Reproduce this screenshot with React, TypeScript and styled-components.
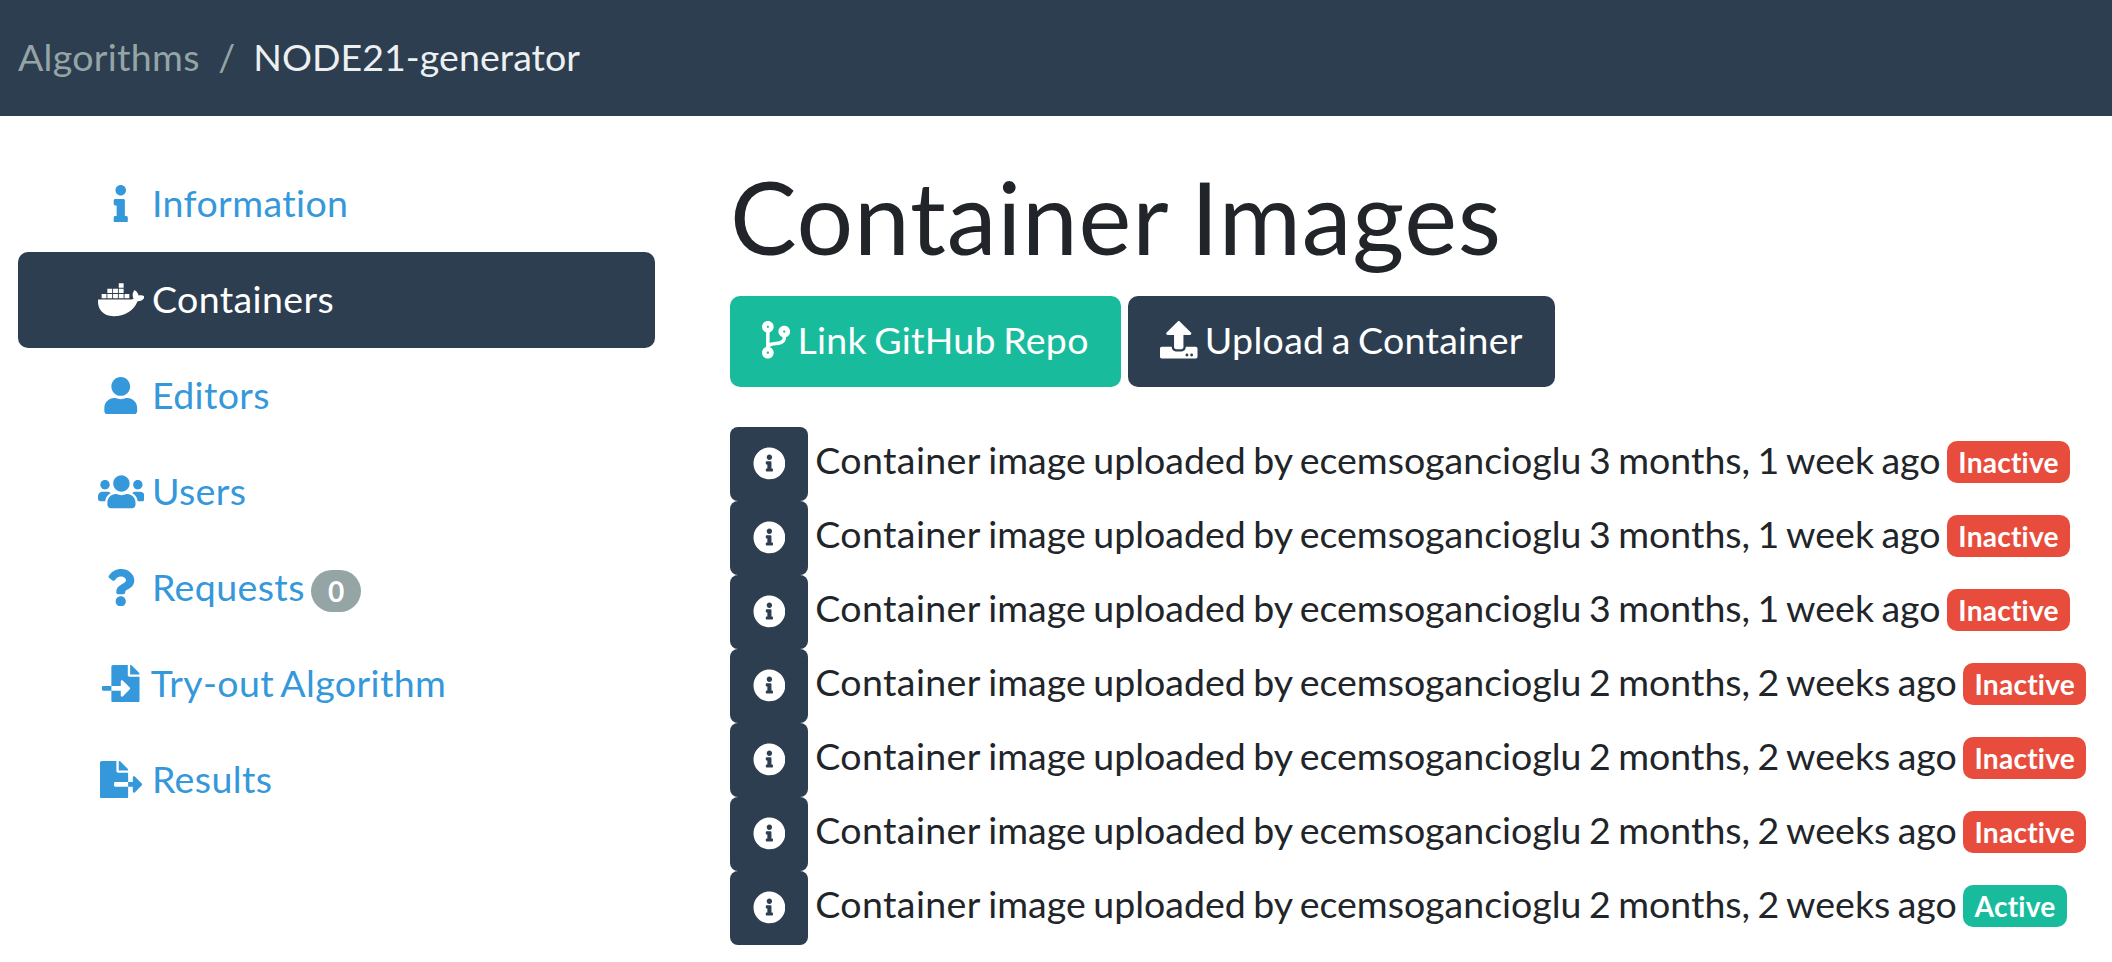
import React from "react";
import styled, { createGlobalStyle } from "styled-components";
import {
  FaInfo,
  FaDocker,
  FaUser,
  FaUsers,
  FaQuestion,
  FaFileImport,
  FaFileExport,
  FaCodeBranch,
  FaUpload,
  FaInfoCircle,
} from "react-icons/fa";
import type { IconType } from "react-icons";

const GlobalStyle = createGlobalStyle`
  *, *::before, *::after { box-sizing: border-box; }
  html, body { margin: 0; padding: 0; overflow: hidden; }
  body {
    background: #fff;
    color: #212529;
    font-family: Lato, "Open Sans", sans-serif;
    font-size: 37.5px;
    line-height: 1.5;
    font-variant-ligatures: none;
  }
  a { text-decoration: none; }
  svg { vertical-align: -0.125em; }
`;

const Breadcrumb = styled.nav`
  background: #2c3e50;
  padding: 29px 18px;
  height: 116px;
  display: flex;
`;

const Crumb = styled.a`
  color: #95a5a6;
  letter-spacing: 0.3px;
`;

const CurrentCrumb = styled.span`
  color: #ecf0f1;
  padding-left: 18.5px;
  letter-spacing: 0.05px;

  &::before {
    content: "/";
    color: #95a5a6;
    padding-right: 18px;
  }
`;

const Layout = styled.div`
  display: flex;
  gap: 75px;
  padding: 40px 0 0 18px;
`;

const Sidebar = styled.nav`
  flex: 0 0 637px;
  letter-spacing: 0.4px;
  word-spacing: -2.6px;
`;

const NavLink = styled.a<{ $active?: boolean }>`
  display: block;
  height: 96px;
  padding: 19px 40px 20px 80px;
  border-radius: 10px;
  color: ${(p) => (p.$active ? "#fff" : "#3498db")};
  background: ${(p) => (p.$active ? "#2c3e50" : "transparent")};
`;

const IconSlot = styled.span<{ $glyphWidth?: number }>`
  display: inline-flex;
  width: 1.25em;
  height: 1em;
  justify-content: center;
  margin-left: -0.4px;
  vertical-align: -0.14em;

  svg {
    flex: none;
    width: ${(p) => p.$glyphWidth ?? 1}em;
  }
`;

const Badge = styled.span<{ $color: string; $pill?: boolean }>`
  display: inline-block;
  padding: ${(p) => (p.$pill ? "0.25em 0.6em" : "0.25em 0.4em")};
  margin-left: -1px;
  border-radius: ${(p) => (p.$pill ? "400px" : "10px")};
  background: ${(p) => p.$color};
  color: #fff;
  font-size: 75%;
  font-weight: 700;
  letter-spacing: 0.2px;
  line-height: 1;
  vertical-align: ${(p) => (p.$pill ? "-1px" : "0.6px")};
  white-space: nowrap;
`;

const Main = styled.main`
  flex: 1;
  white-space: nowrap;
`;

const Title = styled.h1`
  margin: 0 0 20px;
  font-size: 100px;
  font-weight: 400;
  letter-spacing: 0.8px;
  line-height: 1.2;
  word-spacing: -3px;
`;

const Actions = styled.div`
  display: flex;
  gap: 7.3px;
  height: 91px;
  margin-bottom: 40px;
`;

const Button = styled.a<{ $color: string }>`
  padding: 16px 32px;
  border-radius: 10px;
  background: ${(p) => p.$color};
  color: #fff;
  letter-spacing: 0.3px;
  word-spacing: -2.6px;
`;

const BranchIcon = styled(FaCodeBranch)`
  width: 0.75em;
`;

const ImageRow = styled.div`
  height: 74px;
  word-spacing: -2.1px;
`;

const Lead = styled.span`
  letter-spacing: 0.38px;
`;

const InfoButton = styled.a`
  display: inline-block;
  height: 74px;
  padding: 11.6px 22.5px;
  border-radius: 8px;
  background: #2c3e50;
  color: #fff;
  font-size: 32.8px;
  vertical-align: middle;
`;

interface NavItem {
  icon: IconType;
  glyphWidth?: number;
  label: string;
  active?: boolean;
  count?: number;
}

const navItems: NavItem[] = [
  { icon: FaInfo, label: "Information" },
  { icon: FaDocker, glyphWidth: 1.25, label: "Containers", active: true },
  { icon: FaUser, label: "Editors" },
  { icon: FaUsers, glyphWidth: 1.25, label: "Users" },
  { icon: FaQuestion, label: "Requests", count: 0 },
  { icon: FaFileImport, label: "Try-out Algorithm" },
  { icon: FaFileExport, glyphWidth: 1.125, label: "Results" },
];

const images = [
  { age: "3 months, 1 week", active: false },
  { age: "3 months, 1 week", active: false },
  { age: "3 months, 1 week", active: false },
  { age: "2 months, 2 weeks", active: false },
  { age: "2 months, 2 weeks", active: false },
  { age: "2 months, 2 weeks", active: false },
  { age: "2 months, 2 weeks", active: true },
];

export default function App() {
  return (
    <>
      <GlobalStyle />
      <Breadcrumb>
        <Crumb>Algorithms</Crumb>
        <CurrentCrumb>NODE21-generator</CurrentCrumb>
      </Breadcrumb>
      <Layout>
        <Sidebar>
          {navItems.map(({ icon: Icon, glyphWidth, label, active, count }) => (
            <NavLink key={label} $active={active}>
              <IconSlot $glyphWidth={glyphWidth}>
                <Icon />
              </IconSlot>{" "}
              {label}
              {count !== undefined && (
                <>
                  {" "}
                  <Badge $color="#95a5a6" $pill>
                    {count}
                  </Badge>
                </>
              )}
            </NavLink>
          ))}
        </Sidebar>
        <Main>
          <Title>Container Images</Title>
          <Actions>
            <Button $color="#18bc9c">
              <BranchIcon /> Link GitHub Repo
            </Button>
            <Button $color="#2c3e50">
              <FaUpload /> Upload a Container
            </Button>
          </Actions>
          {images.map((image, i) => (
            <ImageRow key={i}>
              <InfoButton>
                <FaInfoCircle />
              </InfoButton>{" "}
              <Lead>Container</Lead> image uploaded by ecemsogancioglu {image.age} ago{" "}
              <Badge $color={image.active ? "#18bc9c" : "#e74c3c"}>
                {image.active ? "Active" : "Inactive"}
              </Badge>
            </ImageRow>
          ))}
        </Main>
      </Layout>
    </>
  );
}
